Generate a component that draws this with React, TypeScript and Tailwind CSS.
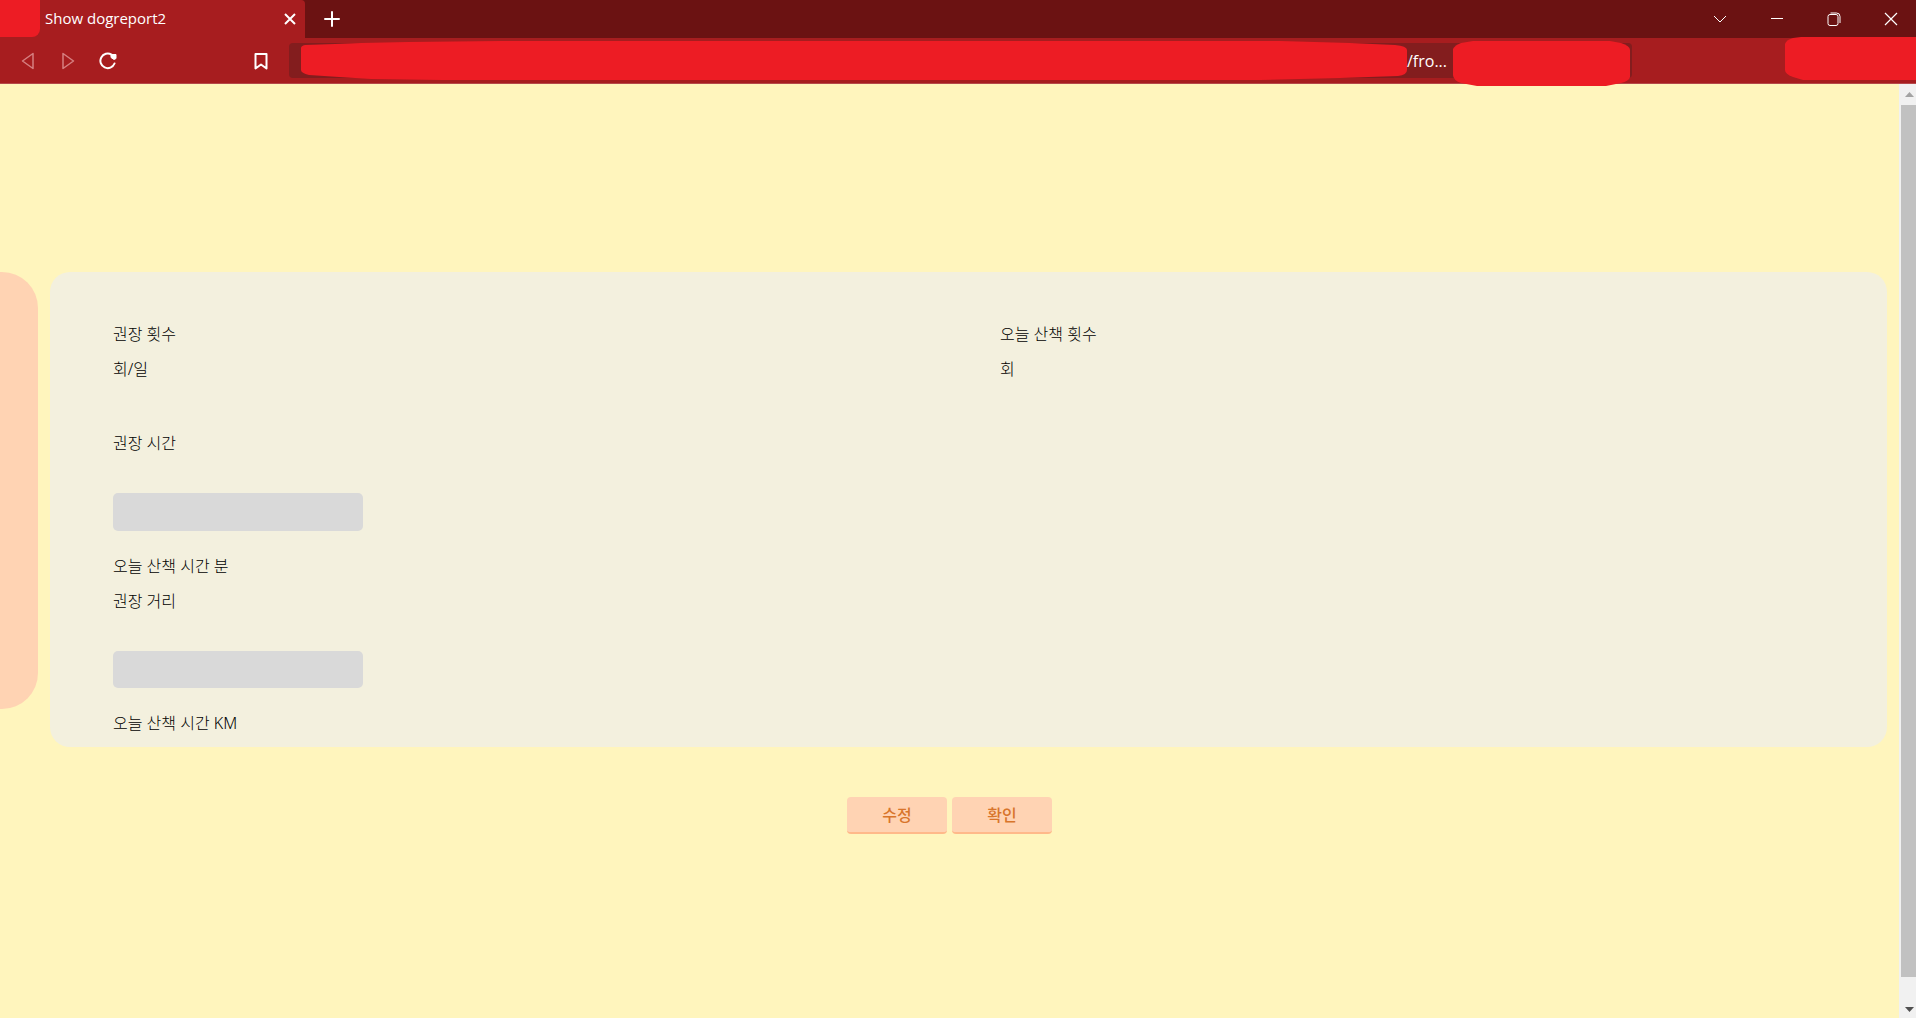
import React from "react";

function Blob({ d, w, h }: { d: string; w: number; h: number }) {
  return (
    <svg className="block h-full w-full" viewBox={`0 0 ${w} ${h}`} preserveAspectRatio="none" aria-hidden="true">
      <path d={d} fill="#ed1c24" />
    </svg>
  );
}

const iconButton = "flex h-8 w-10 items-center justify-center";

function TabStrip() {
  return (
    <header className="flex h-[38px] bg-[#6b1212] text-white">
      <div className="flex w-[305px] items-center rounded-tr bg-[#a71d1f]">
        <div className="mb-px h-[37px] w-10 rounded-br-lg bg-[#ed1c24]" />
        <span className="ml-[5px] flex-1 pb-0.5 text-[15px]">Show dogreport2</span>
        <button aria-label="Close tab" className="mr-[3px] flex h-6 w-6 items-center justify-center">
          <svg width="12" height="12" viewBox="0 0 12 12" stroke="white" strokeWidth="2">
            <path d="M1 1l10 10M11 1L1 11" />
          </svg>
        </button>
      </div>
      <button aria-label="New tab" className="ml-[7px] flex w-10 items-center justify-center">
        <svg width="16" height="16" viewBox="0 0 16 16" stroke="white" strokeWidth="2" strokeLinecap="round">
          <path d="M8 1v14M1 8h14" />
        </svg>
      </button>
      <div className="ml-auto flex">
        <button aria-label="Search tabs" className="flex w-14 items-center justify-center">
          <svg width="14" height="14" viewBox="0 0 14 14" fill="none" stroke="white" strokeWidth="1">
            <path d="M1 4l6 6 6-6" />
          </svg>
        </button>
        <button aria-label="Minimize" className="flex w-[57px] items-center justify-center">
          <svg width="14" height="14" viewBox="0 0 14 14" stroke="white">
            <path d="M1 6.5h12" />
          </svg>
        </button>
        <button aria-label="Restore" className="flex w-[57px] items-center justify-center">
          <svg width="14" height="14" viewBox="0 0 14 14" fill="none" stroke="white">
            <rect x="1" y="2.5" width="10" height="11" rx="2" />
            <path d="M3.5 1h6a3.5 3.5 0 0 1 3.5 3.500v6.500" />
          </svg>
        </button>
        <button aria-label="Close window" className="mr-[-3px] flex w-[57px] items-center justify-center">
          <svg width="14" height="14" viewBox="0 0 14 14" stroke="white" strokeWidth="1.200">
            <path d="M1 1l12 12M13 1L1 13" />
          </svg>
        </button>
      </div>
    </header>
  );
}

function Toolbar() {
  return (
    <nav className="relative flex h-[46px] items-center border-b border-[#b5484a] bg-[#a71d1f] pl-2 text-white">
      <button aria-label="Back" className={iconButton}>
        <svg width="14" height="18" viewBox="0 0 14 18" fill="none" stroke="#d67f80" strokeWidth="1.500" strokeLinejoin="round">
          <path d="M12 1.500v15L1.500 9z" />
        </svg>
      </button>
      <button aria-label="Forward" className={iconButton}>
        <svg width="14" height="18" viewBox="0 0 14 18" fill="none" stroke="#d67f80" strokeWidth="1.500" strokeLinejoin="round">
          <path d="M2 1.500v15L12.500 9z" />
        </svg>
      </button>
      <button aria-label="Reload" className={iconButton}>
        <svg width="18" height="18" viewBox="0 0 18 18" fill="none" stroke="white" strokeWidth="2">
          <path d="M12.500 2.600A7.300 7.300 0 1 0 15.500 11.500" strokeLinecap="round" />
          <path d="M12 2.500h5v4l-2 1-3-2z" fill="white" strokeWidth="1" strokeLinejoin="round" />
        </svg>
      </button>
      <button aria-label="Bookmark" className="ml-[113px] flex h-8 w-10 items-center justify-center">
        <svg width="14" height="18" viewBox="0 0 14 18" fill="none" stroke="white" strokeWidth="2" strokeLinejoin="round">
          <path d="M1.500 2h11v14.500L7 12.500l-5.500 4z" />
        </svg>
      </button>
      <div className="ml-2 mr-[284px] flex h-[35px] flex-1 items-center rounded bg-[#831d1e]">
        <div className="ml-3 h-[39px] flex-1">
          <Blob w={1107} h={39} d="M0 7Q0 5 4 4L34 3L60 2L107 1L200 0H980L1050 2L1095 4Q1107 5 1107 9V29Q1107 34 1098 35L1040 37L960 39H140L70 38L38 36L8 34Q0 32 0 29z" />
        </div>
        <span className="w-[46px] text-base">/fro...</span>
        <div className="mr-0.5 mt-1.5 h-[45px] w-[177px]">
          <Blob w={177} h={45} d="M0 8Q2 4 8 2L20 0H157L168 2Q177 5 177 9V36Q176 40 168 42L153 45H24L8 42Q0 39 0 34z" />
        </div>
      </div>
      <div className="absolute top-[-1px] right-0 h-[43px] w-[131px]">
        <Blob w={131} h={43} d="M0 7Q1 3 8 1L16 0H131V43H18L8 40Q0 37 0 33z" />
      </div>
    </nav>
  );
}

function ScrollRail() {
  return (
    <div aria-hidden="true" className="flex w-[17px] flex-col bg-[#f1f1f1]">
      <div className="flex h-[21px] items-center justify-end pr-0.5">
        <svg width="9" height="5" viewBox="0 0 9 5"><path d="M4.500 0L9 5H0z" fill="#a3a3a3" /></svg>
      </div>
      <div className="ml-0.5 flex-1 bg-[#c1c1c1]" />
      <div className="flex h-[41px] items-end justify-end pr-0.5 pb-1.5">
        <svg width="9" height="5" viewBox="0 0 9 5"><path d="M0 0h9L4.500 5z" fill="#505050" /></svg>
      </div>
    </div>
  );
}

const action =
  "h-[37px] w-[100px] rounded border-b-2 border-[#ffb98a] bg-[#ffd3b3] text-base leading-5 font-medium text-[#d8752b]";

export default function App() {
  return (
    <div className="flex min-h-screen flex-col font-['Noto_Sans','Noto_Sans_CJK_KR',sans-serif]">
      <div className="font-['Open_Sans','Noto_Sans_CJK_KR',sans-serif]">
        <TabStrip />
        <Toolbar />
      </div>
      <div className="flex flex-1 bg-[#fff5bd]">
        <main className="flex-1 pt-[188px] text-base text-black">
          <div className="flex items-start gap-3 pr-3">
            <aside className="h-[437px] w-[38px] rounded-r-[36px] bg-[#ffd3b3]" />
            <section className="flex-1 rounded-[20px] bg-[#f3f0de] pt-[50px] pb-3 pl-[63px] font-light">
              <div className="grid grid-cols-2">
                <div className="flex flex-col gap-[11px]">
                  <p>권장 횟수</p>
                  <p>회/일</p>
                </div>
                <div className="flex flex-col gap-[11px]">
                  <p>오늘 산책 횟수</p>
                  <p>회</p>
                </div>
              </div>
              <p className="mt-[50px]">권장 시간</p>
              <div className="mt-[38px] h-[38px] w-[250px] rounded-[5px] bg-[#d9d9d9]" />
              <p className="mt-[23px]">오늘 산책 시간 분</p>
              <p className="mt-[11px]">권장 거리</p>
              <div className="mt-[38px] h-[37px] w-[250px] rounded-[5px] bg-[#d9d9d9]" />
              <p className="mt-[23px]">오늘 산책 시간 KM</p>
            </section>
          </div>
          <div className="mt-[50px] flex justify-center gap-[5px]">
            <button className={action}>수정</button>
            <button className={action}>확인</button>
          </div>
        </main>
        <ScrollRail />
      </div>
    </div>
  );
}
